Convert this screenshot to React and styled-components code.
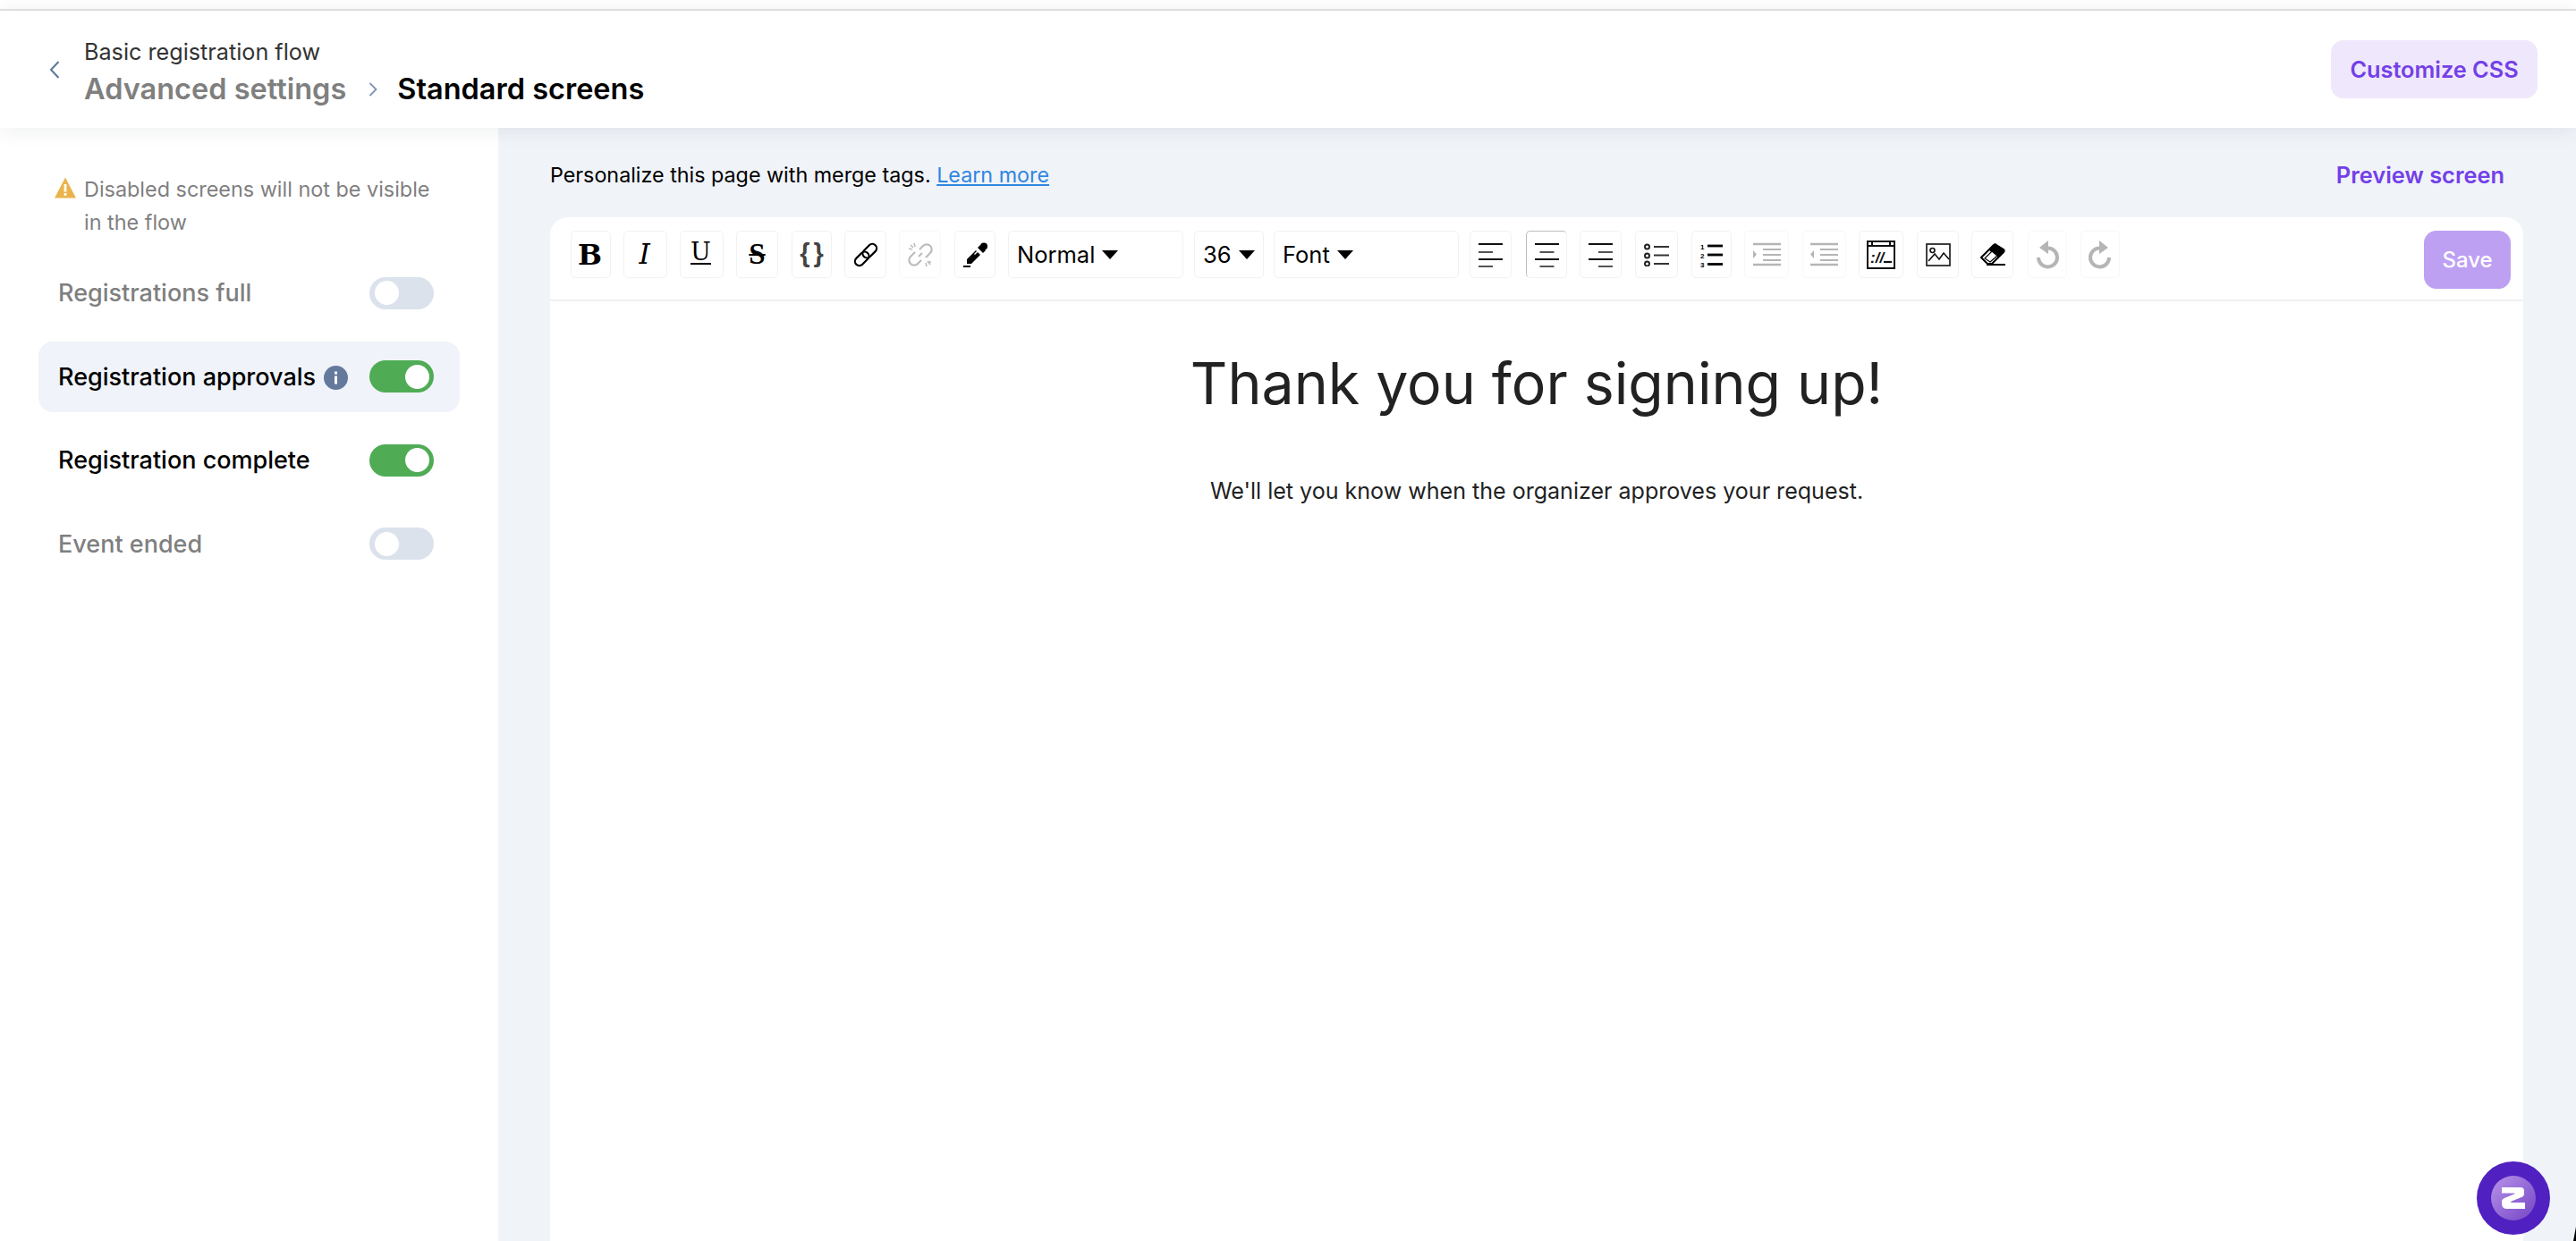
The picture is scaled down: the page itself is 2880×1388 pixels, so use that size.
import React from "react";
import styled, { createGlobalStyle } from "styled-components";

const Global = createGlobalStyle`
  html, body { margin: 0; padding: 0; background: #fff; }
  body { font-family: Inter, "Liberation Sans", sans-serif; }
  * { box-sizing: border-box; }
`;

const Page = styled.div`
  width: 2880px;
  height: 1388px;
  display: flex;
  flex-direction: column;
  overflow: hidden;
  position: relative;
  background: #fff;
`;

const TopLine = styled.div`
  height: 12px;
  border-bottom: 2px solid #e4e4e4;
  background: #fff;
  flex: none;
`;

const Header = styled.header`
  height: 131px;
  flex: none;
  display: flex;
  align-items: center;
  padding: 0 43px 0 55px;
  background: #fff;
  position: relative;
  z-index: 2;
  box-shadow: 0 2px 22px rgba(30, 40, 70, 0.08);
`;

const BackIcon = styled.svg`
  width: 12px;
  height: 20px;
  flex: none;
  margin-right: 27px;
`;

const Crumbs = styled.div`
  display: flex;
  flex-direction: column;
  flex: 1;
  padding-top: 8px;
`;

const FlowName = styled.div`
  font-size: 25.2px;
  line-height: 32px;
  color: #333;
`;

const TitleRow = styled.div`
  display: flex;
  align-items: center;
  margin-top: 4px;
  font-size: 32.5px;
  line-height: 44px;
  font-weight: 600;
`;

const TitleMuted = styled.span`
  color: #7f7f7f;
`;

const TitleSep = styled.svg`
  width: 10px;
  height: 16px;
  margin: 0 22px 0 25px;
`;

const TitleCurrent = styled.span`
  color: #000;
`;

const CustomizeButton = styled.button`
  width: 231px;
  height: 65px;
  border: 0;
  border-radius: 14px;
  background: #efe7fb;
  color: #7340e8;
  font: 600 25.3px Inter, sans-serif;
`;

const Body = styled.div`
  flex: 1;
  display: flex;
  min-height: 0;
`;

const Sidebar = styled.aside`
  width: 557px;
  flex: none;
  padding: 50px 43px 0;
  background: #fff;
`;

const Notice = styled.div`
  display: flex;
  padding: 0 30px 0 18px;
  font-size: 23.4px;
  line-height: 37px;
  color: #7f7f7f;
`;

const NoticeIcon = styled.svg`
  width: 24px;
  height: 24px;
  flex: none;
  margin: 5px 9px 0 0;
`;

const RowList = styled.div`
  display: flex;
  flex-direction: column;
  gap: 14.5px;
  margin-top: 21px;
`;

const Row = styled.div`
  height: 79px;
  display: flex;
  align-items: center;
  padding: 0 29px 0 22px;
  border-radius: 16px;
  background: ${(p) => (p.$selected ? "#f0f3f9" : "transparent")};
  color: ${(p) => (p.$on ? "#000" : "#7f7f7f")};
  font-size: 27px;
  font-weight: 500;
`;

const RowLabel = styled.span`
  flex: 1;
  display: flex;
  align-items: center;
  gap: 9px;
  white-space: nowrap;
`;

const InfoIcon = styled.svg`
  width: 27px;
  height: 27px;
  flex: none;
  margin-top: 3px;
`;

const Toggle = styled.span`
  width: 72px;
  height: 36px;
  flex: none;
  display: flex;
  align-items: center;
  justify-content: ${(p) => (p.$on ? "flex-end" : "flex-start")};
  padding: 0 5.5px;
  border-radius: 18px;
  background: ${(p) => (p.$on ? "#4fac55" : "#dbe2ec")};
`;

const Knob = styled.span`
  width: 27px;
  height: 27px;
  border-radius: 50%;
  background: #fff;
`;

const Main = styled.main`
  flex: 1;
  display: flex;
  flex-direction: column;
  min-width: 0;
  padding: 0 59px 0 58px;
  background: #f0f3f8;
`;

const MainTop = styled.div`
  height: 100px;
  flex: none;
  display: flex;
  align-items: center;
  justify-content: space-between;
  padding: 5px 21px 0 0;
  font-size: 23.3px;
  color: #000;
`;

const LearnMore = styled.a`
  color: #2f86e0;
  text-decoration: underline;
`;

const PreviewLink = styled.a`
  color: #7340e8;
  font-size: 25.4px;
  font-weight: 600;
`;

const Card = styled.section`
  flex: 1;
  background: #fff;
  border-radius: 20px 20px 0 0;
  display: flex;
  flex-direction: column;
`;

const Toolbar = styled.div`
  height: 94px;
  flex: none;
  display: flex;
  align-items: flex-start;
  padding: 15px 14px 0 23px;
  border-bottom: 2px solid #f1f1f1;
`;

const Tool = styled.span`
  width: ${(p) => p.$w}px;
  height: 53px;
  margin-right: ${(p) => p.$gap ?? 14}px;
  flex: none;
  display: flex;
  align-items: center;
  justify-content: ${(p) => (p.$select ? "flex-start" : "center")};
  padding-left: ${(p) => (p.$select ? 9 : 0)}px;
  border: 1.5px solid ${(p) => (p.$faint ? "#f8f8f8" : "#f2f2f2")};
  border-top-color: ${(p) => (p.$active ? "#bdbdbd" : p.$faint ? "#f8f8f8" : "#f2f2f2")};
  border-left-color: ${(p) => (p.$active ? "#bdbdbd" : p.$faint ? "#f8f8f8" : "#f2f2f2")};
  border-radius: 5px;
  color: #000;
  font-size: 25.5px;
`;

const BoldGlyph = styled.span`
  font: 700 32px/1 "DejaVu Serif", serif;
  margin-right: 2px;
`;

const ItalicGlyph = styled.span`
  font: italic 400 31px/1 "DejaVu Serif", serif;
  margin-right: 2px;
`;

const UnderGlyph = styled.span`
  font: 400 27px/22px "DejaVu Serif", serif;
  border-bottom: 2.5px solid #000;
  padding: 0 0 1px;
  margin: -2px 2px 0 0;
`;

const StrikeGlyph = styled.span`
  font: 700 33px/1 "Liberation Serif", serif;
  padding: 0 6px;
  text-decoration: line-through;
  text-decoration-thickness: 2px;
`;

const BraceGlyph = styled.span`
  font: 700 29px/1 "Liberation Sans", sans-serif;
  color: #444;
  letter-spacing: 4px;
  margin: -2px 0 0 4px;
`;

const Caret = styled.i`
  width: 0;
  height: 0;
  margin-left: 8px;
  border-left: 9px solid transparent;
  border-right: 9px solid transparent;
  border-top: 10px solid #000;
`;

const Spacer = styled.span`
  flex: 1;
`;

const SaveButton = styled.button`
  width: 97px;
  height: 65px;
  flex: none;
  border: 0;
  border-radius: 14px;
  background: #bea0f3;
  color: #fff;
  font: 500 24px Inter, sans-serif;
`;

const Content = styled.div`
  flex: 1;
  text-align: center;
  color: #222;
`;

const Heading = styled.h1`
  margin: 52px 0 0;
  font-size: 64.4px;
  line-height: 80px;
  font-weight: 400;
`;

const Paragraph = styled.p`
  margin: 60px 0 0;
  font-size: 25.05px;
  line-height: 40px;
  color: #222;
`;

const Fab = styled.div`
  position: absolute;
  left: 2769px;
  top: 1299px;
  width: 82px;
  height: 82px;
  display: flex;
  align-items: center;
  justify-content: center;
  border-radius: 50%;
  background: #5020c0;
  z-index: 5;
`;

const FabInner = styled.div`
  width: 50px;
  height: 50px;
  border-radius: 50%;
  display: flex;
  align-items: center;
  justify-content: center;
  background: linear-gradient(135deg, #b893ea 0%, #7445c4 100%);
`;

const CornerMark = styled.svg`
  position: absolute;
  right: 0;
  bottom: 0;
  width: 3px;
  height: 16px;
`;

const I = ({ w, h, children, stroke = "none", fill = "none", sw = 2 }) => (
  <svg width={w} height={h} viewBox={`0 0 ${w} ${h}`} fill={fill} stroke={stroke} strokeWidth={sw}>
    {children}
  </svg>
);

const lines = (rows, color, sw) =>
  rows.map(([x1, x2, y], i) => <line key={i} x1={x1} x2={x2} y1={y} y2={y} stroke={color} strokeWidth={sw} />);

const Chain = ({ color }) => (
  <I w={28} h={28} stroke={color} sw={2.2}>
    <rect x="0.7" y="13.5" width="18" height="9.6" rx="4.8" transform="rotate(-45 9.7 18.3)" />
    <rect x="9.3" y="4.9" width="18" height="9.6" rx="4.8" transform="rotate(-45 18.3 9.7)" />
  </I>
);

const Unchain = () => (
  <I w={28} h={28} stroke="#bcbcbc" sw={2.2}>
    <path d="M13 8 L17 4 a5.6 5.6 0 0 1 8 8 L20 17 M15 20 L11 24 a5.6 5.6 0 0 1 -8 -8 L8 11" />
    <path d="M12 16 L16 12" />
    <path d="M1 7 L5 8 M7 1 L8 5 M3 3 L6 6 M22 22 L26 22 M20 23 L21 27 M22 21 L25 25" strokeWidth="1.6" />
  </I>
);

const Pen = () => (
  <I w={27} h={28}>
    <path d="M14 9 L19 14 L9 24 L4 24 L4 19 Z" fill="#000" />
    <path d="M16 6 L22 12 L25 9 L19 3 Z" fill="#000" />
    <circle cx="23" cy="4.5" r="4" fill="#000" />
    <path d="M12.5 13.5 L16 10" stroke="#fff" strokeWidth="1.4" />
    <rect x="0" y="26" width="8" height="2" fill="#000" />
  </I>
);

const Align = ({ kind }) => {
  const x = { left: [0, 16], center: [5.5, 21.5], right: [11, 27] }[kind];
  return (
    <I w={27} h={28}>
      {lines([[0, 27, 2]], "#111", 2)}
      {lines([[x[0], x[1], 11]], "#555", 2)}
      {lines([[0, 27, 19]], "#111", 2)}
      {lines([[x[0], x[1], 27]], "#555", 2)}
    </I>
  );
};

const Bullets = () => (
  <I w={28} h={26}>
    {[4, 14, 23].map((y) => (
      <circle key={y} cx="3.5" cy={y} r="2.5" stroke="#222" strokeWidth="2" />
    ))}
    {lines([[11, 28, 4], [11, 28, 13.5], [11, 28, 23]], "#333", 2)}
  </I>
);

const Numbers = () => (
  <I w={26} h={28}>
    <text x="0" y="8" fontSize="8" fontWeight="700" fontFamily="Liberation Sans" fill="#000">1</text>
    <text x="0" y="18" fontSize="8" fontWeight="700" fontFamily="Liberation Sans" fill="#000">2</text>
    <text x="0" y="27.5" fontSize="8" fontWeight="700" fontFamily="Liberation Sans" fill="#000">3</text>
    {lines([[8, 25, 4], [8, 25, 14], [8, 25, 24.5]], "#000", 2.8)}
  </I>
);

const Indent = ({ out }) => (
  <I w={31} h={27}>
    {lines([[0, 31, 2], [0, 31, 25]], "#b5b5b5", 2.5)}
    {lines([[11, 31, 8], [11, 31, 14], [11, 31, 20]], "#b5b5b5", 2)}
    <path d={out ? "M4 9 L0 13.5 L4 18 Z" : "M0 9 L4 13.5 L0 18 Z"} fill="#b5b5b5" />
  </I>
);

const CodeWin = () => (
  <I w={32} h={32} stroke="#111" sw={2}>
    <rect x="1" y="1" width="30" height="30" />
    <path d="M1 6h30M6 1v5M26 1v5" />
    <text x="4" y="25" fontSize="17" fontWeight="700" fontFamily="Liberation Sans" fill="#111" stroke="none" fontStyle="italic">://</text>
    <path d="M19 24h9" strokeWidth="2.2" />
  </I>
);

const Picture = () => (
  <I w={28} h={26} stroke="#111" sw={1.6}>
    <rect x="1" y="1" width="26" height="24" />
    <circle cx="7.5" cy="8" r="2.5" />
    <path d="M3 20 L10 12 L15 18 L20 11 L26 18" />
  </I>
);

const Eraser = () => (
  <I w={28} h={27}>
    <path d="M1 17 L15 3 a2 2 0 0 1 3 0 L26 8 a2 2 0 0 1 0 3 L13 24 H8 Z" stroke="#000" strokeWidth="2" fill="#fff" />
    <path d="M14 4 L17 2 L26 8 L27 10 L20 17 L10 9 Z" fill="#000" />
    <path d="M5 18 L13 10 L19 15 L11 22 Z" stroke="#000" strokeWidth="1.2" fill="#fff" />
    <path d="M7 25 H28" stroke="#000" strokeWidth="2" />
  </I>
);

const History = ({ flip }) => (
  <I w={26} h={32}>
    <g transform={flip ? "translate(26 0) scale(-1 1)" : undefined}>
      <path d="M3 19 A10.5 10.5 0 1 0 13 8.5" stroke="#b5b5b5" strokeWidth="4" />
      <path d="M14 0 L14 15 L4 8 Z" fill="#b5b5b5" />
    </g>
  </I>
);

const rows = [
  { label: "Registrations full" },
  { label: "Registration approvals", on: true, selected: true, info: true },
  { label: "Registration complete", on: true },
  { label: "Event ended" },
];

export default function App() {
  return (
    <Page>
      <Global />
      <TopLine />
      <Header>
        <BackIcon viewBox="0 0 12 20" fill="none" stroke="#5b7799" strokeWidth="2">
          <path d="M10.5 1 L2 10 L10.5 19" />
        </BackIcon>
        <Crumbs>
          <FlowName>Basic registration flow</FlowName>
          <TitleRow>
            <TitleMuted>Advanced settings</TitleMuted>
            <TitleSep viewBox="0 0 10 16" fill="none" stroke="#7e95b3" strokeWidth="1.8">
              <path d="M1.5 1 L8.5 8 L1.5 15" />
            </TitleSep>
            <TitleCurrent>Standard screens</TitleCurrent>
          </TitleRow>
        </Crumbs>
        <CustomizeButton>Customize CSS</CustomizeButton>
      </Header>
      <Body>
        <Sidebar>
          <Notice>
            <NoticeIcon viewBox="0 0 24 24">
              <path d="M12 0.5 L24 23.5 H0 Z" fill="#e9b44c" />
              <rect x="10.6" y="8" width="2.8" height="8.5" fill="#fff" />
              <rect x="10.6" y="18" width="2.8" height="2.8" fill="#fff" />
            </NoticeIcon>
            <span>Disabled screens will not be visible in the flow</span>
          </Notice>
          <RowList>
            {rows.map((r) => (
              <Row key={r.label} $on={r.on} $selected={r.selected}>
                <RowLabel>
                  {r.label}
                  {r.info && (
                    <InfoIcon viewBox="0 0 27 27">
                      <circle cx="13.5" cy="13.5" r="13.5" fill="#64799b" />
                      <rect x="12" y="11.5" width="3" height="9" fill="#fff" />
                      <rect x="12" y="6.5" width="3" height="3" fill="#fff" />
                    </InfoIcon>
                  )}
                </RowLabel>
                <Toggle $on={r.on}>
                  <Knob />
                </Toggle>
              </Row>
            ))}
          </RowList>
        </Sidebar>
        <Main>
          <MainTop>
            <span>
              Personalize this page with merge tags. <LearnMore>Learn more</LearnMore>
            </span>
            <PreviewLink>Preview screen</PreviewLink>
          </MainTop>
          <Card>
            <Toolbar>
              <Tool $w={45}><BoldGlyph>B</BoldGlyph></Tool>
              <Tool $w={49}><ItalicGlyph>I</ItalicGlyph></Tool>
              <Tool $w={49}><UnderGlyph>U</UnderGlyph></Tool>
              <Tool $w={47} $gap={15}><StrikeGlyph>S</StrikeGlyph></Tool>
              <Tool $w={45}><BraceGlyph>{"{}"}</BraceGlyph></Tool>
              <Tool $w={47}><Chain color="#000" /></Tool>
              <Tool $w={47} $gap={15} $faint><Unchain /></Tool>
              <Tool $w={46}><Pen /></Tool>
              <Tool $w={196} $gap={12} $select>Normal<Caret /></Tool>
              <Tool $w={78} $gap={11} $select>36<Caret /></Tool>
              <Tool $w={207} $gap={12} $select>Font<Caret /></Tool>
              <Tool $w={47} $gap={16}><Align kind="left" /></Tool>
              <Tool $w={46} $active><Align kind="center" /></Tool>
              <Tool $w={47} $gap={15}><Align kind="right" /></Tool>
              <Tool $w={48} $gap={15}><Bullets /></Tool>
              <Tool $w={45}><Numbers /></Tool>
              <Tool $w={50} $gap={15} $faint><Indent /></Tool>
              <Tool $w={49} $faint><Indent out /></Tool>
              <Tool $w={50} $gap={15}><CodeWin /></Tool>
              <Tool $w={47}><Picture /></Tool>
              <Tool $w={47} $gap={16}><Eraser /></Tool>
              <Tool $w={44} $gap={15} $faint><History /></Tool>
              <Tool $w={44} $gap={0} $faint><History flip /></Tool>
              <Spacer />
              <SaveButton>Save</SaveButton>
            </Toolbar>
            <Content>
              <Heading>Thank you for signing up!</Heading>
              <Paragraph>We'll let you know when the organizer approves your request.</Paragraph>
            </Content>
          </Card>
        </Main>
      </Body>
      <Fab>
        <FabInner>
          <svg width="28" height="24" viewBox="0 0 28 24" fill="#fff">
            <path d="M1 0 H22 Q26 0 26 4 V7 Q26 10 23 11 L12 15.5 Q10 16.5 12 17 H27 V24 H7 Q1 24 1 18 V16 Q1 13 4 12 L15 7.5 Q16 7 15 6.5 H1 Z" />
          </svg>
        </FabInner>
      </Fab>
      <CornerMark viewBox="0 0 3 16">
        <path d="M3 0 V16 H0 Q1.5 8 3 0 Z" fill="#000" />
      </CornerMark>
    </Page>
  );
}
